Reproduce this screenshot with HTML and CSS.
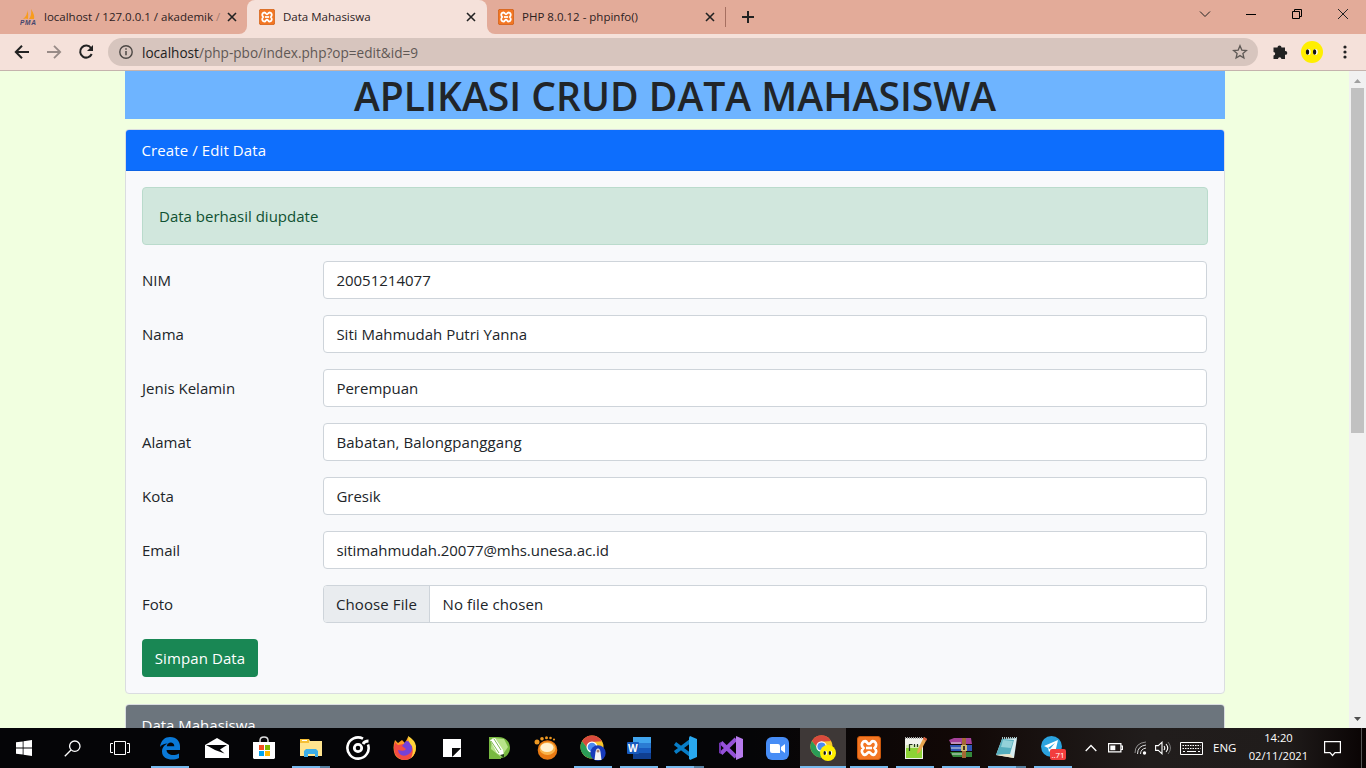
FILE: index.html
```html
<!DOCTYPE html>
<html lang="id">
<head>
<meta charset="utf-8">
<title>Data Mahasiswa</title>
<link rel="stylesheet" href="styles.css">
</head>
<body>
<svg class="defs" width="0" height="0">
  <symbol id="xampp" viewBox="0 0 24 24">
    <rect x=".5" y=".5" width="23" height="23" rx="2.5" fill="#f37623" stroke="#c9570c"/>
    <path d="M6.500 5.600Q9 4.500 10.300 6.800Q12 9 13.700 6.800Q15 4.500 17.500 5.600Q20.800 8.500 17.600 12Q20.800 15.500 17.500 18.400Q15 19.500 13.700 17.200Q12 15 10.300 17.200Q9 19.500 6.500 18.400Q3.200 15.500 6.400 12Q3.200 8.500 6.500 5.600Z" fill="none" stroke="#fff" stroke-width="2.700"/>
    <path d="M9 12h6" stroke="#fff" stroke-width="2.600"/>
  </symbol>
  <symbol id="close" viewBox="0 0 10 10"><path d="M1 1l8 8M9 1L1 9" stroke="#222" stroke-width="1.600"/></symbol>
  <symbol id="chrome" viewBox="0 0 24 24">
    <circle cx="12" cy="12" r="11.500" fill="#f8c62c"/>
    <path d="M2 6.200A11.500 11.500 0 0 1 22 6.200L12 7L8 14Z" fill="#d94a3d"/>
    <path d="M2 6.200A11.500 11.500 0 0 0 11.500 23.500L16 15L8 14Z" fill="#2a9c57"/>
    <circle cx="12" cy="12" r="5.500" fill="#fff"/><circle cx="12" cy="12" r="4.300" fill="#4a8af0"/>
  </symbol>
  <symbol id="face" viewBox="0 0 22 22">
    <circle cx="11" cy="11" r="11" fill="#ffef00"/>
    <ellipse cx="7.300" cy="11" rx="2.400" ry="3" fill="#fff"/><ellipse cx="14.400" cy="11" rx="2.400" ry="3" fill="#fff"/>
    <ellipse cx="6.500" cy="11" rx="1.700" ry="2.800" fill="#111"/><ellipse cx="13.600" cy="11" rx="1.700" ry="2.800" fill="#111"/>
  </symbol>
</svg>

<header class="tabs">
  <div class="tab tab-pma">
    <svg width="16" height="16" viewBox="0 0 16 16"><path d="M7 1q1 5-4 9 3-1 5 0Q9 5 7 1ZM11 0q4 6 3 10H9Q12 6 11 0Z" fill="#f89c1c"/><text x="0" y="15.500" class="pma-text" textLength="16">PMA</text></svg>
    <span class="tab-title">localhost / 127.0.0.1 / akademik <i>/</i></span>
    <svg class="x" width="10" height="10"><use href="#close"/></svg>
  </div>
  <div class="tab-slot">
    <div class="tab tab-active">
      <svg width="16" height="16"><use href="#xampp"/></svg>
      <span class="tab-title">Data Mahasiswa</span>
      <svg class="x" width="10" height="10"><use href="#close"/></svg>
    </div>
  </div>
  <div class="tab tab-php">
    <svg width="16" height="16"><use href="#xampp"/></svg>
    <span class="tab-title">PHP 8.0.12 - phpinfo()</span>
    <svg class="x" width="10" height="10"><use href="#close"/></svg>
    <i class="divider"></i>
  </div>
  <svg class="newtab" width="12" height="12" viewBox="0 0 12 12"><path d="M6 0v12M0 6h12" stroke="#222" stroke-width="2"/></svg>
  <div class="winbtns">
    <svg width="12" height="12" viewBox="0 0 12 12"><path d="M1 3.500l5 5 5-5" fill="none" stroke="#222"/></svg>
    <svg width="12" height="12" viewBox="0 0 12 12"><path d="M1 6.500h10" stroke="#000"/></svg>
    <svg width="12" height="12" viewBox="0 0 12 12"><path d="M1.500 3.500h7v7h-7zM3.500 3.500v-2h7v7h-2" fill="none" stroke="#000"/></svg>
    <svg width="12" height="12" viewBox="0 0 12 12"><path d="M1 1l10 10M11 1L1 11" stroke="#222"/></svg>
  </div>
</header>

<nav class="toolbar">
  <svg width="16" height="14" viewBox="0 0 16 14"><path d="M15 7H2M8 .8L1.800 7 8 13.200" fill="none" stroke="#222" stroke-width="2"/></svg>
  <svg width="16" height="14" viewBox="0 0 16 14"><path d="M1 7h13M8 .8L14.200 7 8 13.200" fill="none" stroke="#988b87" stroke-width="1.800"/></svg>
  <svg width="16" height="16" viewBox="0 0 16 16"><path d="M13 4A6 6 0 1 0 13.700 10" fill="none" stroke="#222" stroke-width="2"/><path d="M15 1v6H9z" fill="#222"/></svg>
  <div class="address">
    <svg width="16" height="16" viewBox="0 0 16 16"><circle cx="8" cy="8" r="6.200" fill="none" stroke="#4c4744" stroke-width="1.400"/><path d="M8 7v4.300M8 4.300v1.500" stroke="#4c4744" stroke-width="1.500"/></svg>
    <span class="url"><b>localhost</b>/php-pbo/index.php?op=edit&amp;id=9</span>
    <svg class="star" width="16" height="16" viewBox="0 0 16 16"><path d="M8 1.800l1.800 4.300 4.600.4-3.500 3 1 4.500L8 11.600 4.100 14l1-4.500-3.500-3 4.600-.4z" fill="none" stroke="#5f5956" stroke-width="1.300"/></svg>
  </div>
  <svg class="puzzle" width="16" height="16" viewBox="0 0 16 16"><path d="M2 3.500h3.500a2 2 0 1 1 4 0H13V7h.4a1.900 1.900 0 0 1 0 3.800H13V15H9.400a1.700 1.700 0 0 0-3.400 0H1.500v-3.600a1.700 1.700 0 0 0 0-3.400V3.500z" fill="#222"/></svg>
  <svg class="avatar" width="22" height="22"><use href="#face"/></svg>
  <svg class="dots" width="4" height="14" viewBox="0 0 4 14"><circle cx="2" cy="2" r="1.600"/><circle cx="2" cy="7" r="1.600"/><circle cx="2" cy="12" r="1.600"/></svg>
</nav>

<div class="viewport">
  <main class="page">
    <h1>APLIKASI CRUD DATA MAHASISWA</h1>
    <section class="card">
      <div class="card-header create">Create / Edit Data</div>
      <div class="card-body">
        <div class="alert">Data berhasil diupdate</div>
        <div class="row"><label>NIM</label><div class="control">20051214077</div></div>
        <div class="row"><label>Nama</label><div class="control">Siti Mahmudah Putri Yanna</div></div>
        <div class="row"><label>Jenis Kelamin</label><div class="control">Perempuan</div></div>
        <div class="row"><label>Alamat</label><div class="control address-value">Babatan, Balongpanggang</div></div>
        <div class="row"><label>Kota</label><div class="control">Gresik</div></div>
        <div class="row"><label>Email</label><div class="control email-value">sitimahmudah.20077@mhs.unesa.ac.id</div></div>
        <div class="row"><label>Foto</label><div class="control file"><span class="choose">Choose File</span><span class="nofile">No file chosen</span></div></div>
        <button class="save">Simpan Data</button>
      </div>
    </section>
    <section class="card card-list"><div class="card-header gray">Data Mahasiswa</div></section>
  </main>
  <aside class="scrollbar">
    <svg width="7" height="4" viewBox="0 0 7 4"><path d="M0 4L3.500 0 7 4z" fill="#a0a0a0"/></svg>
    <div class="thumb"></div>
    <svg class="down" width="7" height="4" viewBox="0 0 7 4"><path d="M0 0l3.500 4L7 0z" fill="#505050"/></svg>
  </aside>
</div>

<footer class="taskbar">
  <div class="sys"><svg width="16" height="16" viewBox="0 0 16 16"><path d="M0 2.300L6.700 1.400V7.500H0zM7.500 1.300L16 0v7.500H7.500zM0 8.500h6.700v6.100L0 13.700zM7.500 8.500H16V16l-8.500-1.300z" fill="#fff"/></svg></div>
  <div class="sys"><svg width="17" height="17" viewBox="0 0 17 17"><circle cx="10.800" cy="6.200" r="5.200" fill="none" stroke="#fff" stroke-width="1.300"/><path d="M7 10L.8 16.200" stroke="#fff" stroke-width="1.300"/></svg></div>
  <div class="sys"><svg width="20" height="14" viewBox="0 0 20 14"><path d="M4.500.5h11v13h-11zM3 2.500H.5v9H3M17 2.500h2.500v9H17" fill="none" stroke="#fff"/></svg></div>

  <div class="app on"><svg width="22" height="24" viewBox="0 0 22 24"><path d="M1 11C2 4 6 1 11 1c7 0 10 5 10 9v4H7.500c.5 5 7 6.500 12.500 3.500V22C14 25 3 24 3 15.500 3 10.500 7 8 9 7.500 5 7.500 2.500 9 1 11zM7.800 10.200h7.500C15.300 5.500 8.500 5.200 7.800 10.200z" fill="#0a79d7"/></svg></div>
  <div class="app"><svg width="24" height="20" viewBox="0 0 24 20"><path d="M0 7L12 0l12 7v13H0z" fill="#fff"/><path d="M1 7h21l-7 4.500 4.500 4L10 12z" fill="#050507"/></svg></div>
  <div class="app"><svg width="24" height="24" viewBox="0 0 24 24"><path d="M8 7V4.500Q8 1 12 1t4 3.500V7" fill="none" stroke="#ddd" stroke-width="1.500"/><path d="M1 6h22v16l-1 1H2l-1-1z" fill="#fff"/><path d="M7 9h5v5H7z" fill="#f25022"/><path d="M13 9h5v5h-5z" fill="#7fba00"/><path d="M7 15h5v5H7z" fill="#00a4ef"/><path d="M13 15h5v5h-5z" fill="#ffb900"/></svg></div>
  <div class="app on stacked"><svg width="22" height="20" viewBox="0 0 22 20"><path d="M0 1h9l1 2h12v15H0z" fill="#ffe48e"/><path d="M0 1h9v4H0z" fill="#f5bf36"/><path d="M2 2h5v1H2z" fill="#fff"/><path d="M4 19v-6l2-2h10l2 2v6h-3v-3H8v3z" fill="#3caee8"/></svg></div>
  <div class="app"><svg width="24" height="24" viewBox="0 0 24 24"><path d="M17 2.700A10.600 10.600 0 1 0 22 8.500" fill="none" stroke="#fff" stroke-width="2.600"/><circle cx="12" cy="12" r="3.700" fill="none" stroke="#fff" stroke-width="2.800"/><path d="M17 8q1.500-3 5.500-3" fill="none" stroke="#fff" stroke-width="2.800"/></svg></div>
  <div class="app"><svg width="24" height="24" viewBox="0 0 24 24"><path d="M2 4l3 3 4-3 3 3 3-6 3 5 3 1q3 5 1 10-3 7-10 7T2 19Q-1 12 2 4z" fill="#ff9c22"/><path d="M2 6l3 3 5-1 6 4 4-2 2 7q-4 7-10 7T2 18Q0 12 2 6z" fill="#f34b43"/><path d="M13 5q5 0 6 5t-3 8-8 1q-3-2-3-5 7 2 8-1l-4-3z" fill="#7542d8"/><path d="M15 0q7 4 8 10 0 8-5 12 3-6 1-12-4-4-4-10z" fill="#ffd43a"/></svg></div>
  <div class="app"><svg width="18" height="18" viewBox="0 0 18 18"><path d="M0 0h18v18H0z" fill="#fff"/><path d="M9 9h9L9 18z" fill="#0b0b0c"/><path d="M9 18l9-9v9z" fill="#fff"/><path d="M9.500 17.500l8-8" stroke="#0b0b0c" stroke-width=".6"/></svg></div>
  <div class="app"><svg width="22" height="24" viewBox="0 0 22 24"><path d="M1 1h9c9 0 12 6 12 11S18 22 13 22v1H1z" fill="#78b941"/><path d="M4 2l12 1 4 8-7 10L3 13z" fill="#b8e38a"/><path d="M2 4l5-2 8 12 1 7-7-4z" fill="#fff"/><path d="M6 3l7 11M3 5l8 12" stroke="#7eb750"/><path d="M12 19l4-1v4z" fill="#244218"/></svg></div>
  <div class="app"><svg width="24" height="24" viewBox="0 0 24 24"><circle cx="13.500" cy="14" r="9.800" fill="#e97a12"/><ellipse cx="13.500" cy="12.500" rx="8" ry="6.500" fill="#f9b44b"/><ellipse cx="13" cy="11.500" rx="6.500" ry="4.500" fill="#fff0cf"/><g fill="#ed9822"><circle cx="3" cy="6" r="2.500"/><circle cx="8" cy="2.800" r="1.800"/><circle cx="12.500" cy="1.800" r="1.500"/><circle cx="16.500" cy="2" r="1.300"/><circle cx="20" cy="3.500" r="1.100"/></g></svg></div>
  <div class="app on"><svg width="26" height="26" viewBox="0 0 26 26"><svg x="0" y="0" width="24" height="24"><use href="#chrome"/></svg><circle cx="18" cy="18" r="7.700" fill="#173bbb"/><path d="M14.500 25l1-8q.5-3.500 2.500-3.500t2.500 3.500l1 8z" fill="#f3f3f5"/><circle cx="18" cy="16" r="1.500" fill="#a77d6b"/></svg></div>
  <div class="app n on"><svg width="24" height="22" viewBox="0 0 24 22"><rect x="6" width="18" height="22" rx="1" fill="#2b7cd3"/><path d="M6 0h18v6H6z" fill="#41a5ee"/><path d="M6 11h18v5H6z" fill="#185abd"/><path d="M6 16h18v6H6z" fill="#103f91"/><rect y="5" width="12" height="12" rx="1" fill="#185abd"/><text x="1" y="14.800" class="word-w" textLength="10">W</text></svg></div>
  <div class="app n on stacked"><svg width="24" height="24" viewBox="0 0 24 24"><path d="M18 4.500L2 16.500M18 19.500L2 7.500" stroke="#087dc6" stroke-width="3.600"/><path d="M17 0l7 3v18l-7 3-1-1.500V1.500z" fill="#29a9f0"/></svg></div>
  <div class="app n"><svg width="24" height="24" viewBox="0 0 24 24"><path d="M17 3L2 17.500M17 21L2 6.500" stroke="#9551d8" stroke-width="4"/><path d="M0 7l2-1v12l-2-1z" fill="#7134ae"/><path d="M17 0l7 3v18l-7 3z" fill="#b77bed"/></svg></div>
  <div class="app n"><svg width="23" height="23" viewBox="0 0 23 23"><rect width="23" height="23" rx="6" fill="#478df6"/><path d="M4 7h8q2 0 2 2v7H6q-2 0-2-2zM15 10l4-3v9l-4-3z" fill="#fff"/></svg></div>
  <div class="app n on current"><svg width="26" height="26" viewBox="0 0 26 26"><svg x="0" y="0" width="23" height="23"><use href="#chrome"/></svg><svg x="10" y="10" width="16" height="16"><use href="#face"/></svg></svg></div>
  <div class="app n on"><svg width="24" height="24"><use href="#xampp"/></svg></div>
  <div class="app n on"><svg width="24" height="24" viewBox="0 0 24 24"><path d="M2 2h18v21H2z" fill="#f2f2ec"/><path d="M3 12h16v10H3z" fill="#8dd335"/><path d="M3 9h16v3H3z" fill="#d4ecb0"/><path d="M2 2h18" stroke="#aaa" stroke-width="2" stroke-dasharray="1 1"/><path d="M6.500 15V8.500h3M11.500 8v3M14.500 8v3" fill="none" stroke="#24331d" stroke-width="1.200"/><path d="M21 1l3 2-7 13-3 2 .5-4z" fill="#e7a54e"/><path d="M21 1l3 2-1 2-3-2z" fill="#d55b43"/></svg></div>
  <div class="app n on"><svg width="24" height="20" viewBox="0 0 24 20"><path d="M0 2l5-2h17l1 6H2z" fill="#a6429a"/><path d="M1 7h22v6H2z" fill="#3156b8"/><path d="M1 14h22v5H4z" fill="#35893b"/><path d="M2 5h10M2 10h10M3 16h10" stroke="#ddd"/><path d="M13 0h4v20h-4z" fill="#a46a35"/><path d="M12 7h6v6h-6z" fill="#cfbb72"/><path d="M14 8h2v4h-2z" fill="#463520"/></svg></div>
  <div class="app n on stacked"><svg width="24" height="24" viewBox="0 0 24 24"><path d="M7 3l15-1-3 20-18-3z" fill="#d8eef2"/><path d="M7 3l12 1-4 14-14 1z" fill="#55adbd"/><path d="M8 4l10 1-2 7-10-1z" fill="#93d1d9"/><path d="M1 19l14-1 4 4z" fill="#eee4c8"/><path d="M7 2h15" stroke="#a5c4c7" stroke-width="2" stroke-dasharray="1 1"/></svg></div>
  <div class="app n on"><svg width="26" height="26" viewBox="0 0 26 26"><circle cx="11.500" cy="11.500" r="10.500" fill="#2ba3df"/><path d="M4 11l14-6-3 13-4-3-2 2-1-4z" fill="#fff"/><path d="M8 13l7-5-5 6z" fill="#2ba3df"/><rect x="10" y="14" width="16" height="11" rx="2" fill="#f23d3d"/><text x="11.500" y="23" class="badge" textLength="13">..71</text></svg></div>

  <div class="tray">
    <svg width="12" height="8" viewBox="0 0 12 8"><path d="M.7 7L6 1.500 11.300 7" fill="none" stroke="#fff" stroke-width="1.300"/></svg>
    <svg class="t-bat" width="15" height="10" viewBox="0 0 15 10"><path d="M.6.600h12.300v8.300H.600zM13 3h1.500v3.500H13" fill="none" stroke="#fff" stroke-width="1.200"/><path d="M2.300 2.500h5v4.700h-5z" fill="#fff"/></svg>
    <svg class="t-wifi" width="13" height="14" viewBox="0 0 13 14"><g fill="none" stroke="#ddd"><path d="M1 12Q1 2 12 1" opacity=".6"/><path d="M3.500 13Q3.500 5 12 4"/><path d="M6.500 13Q6.500 8 12 7"/></g><circle cx="10.500" cy="12" r="1.700" fill="#fff"/></svg>
    <svg class="t-vol" width="17" height="14" viewBox="0 0 17 14"><path d="M.6 4.600h2.700L7 1.200v11.600L3.300 9.400H.600zM9 5q1.500 2 0 4M11 3q3.500 4 0 8" fill="none" stroke="#fff" stroke-width="1.100"/><path d="M13 1q5 6 0 12" fill="none" stroke="#777"/></svg>
    <svg class="t-key" width="23" height="13" viewBox="0 0 23 13"><path d="M.5.500h22v12H.5z" fill="none" stroke="#fff"/><path d="M2.500 3.500h18M2.500 6.500h18" stroke="#fff" stroke-dasharray="1.500 1"/><path d="M3 9.500h2M7 9.500h9M18 9.500h2" stroke="#fff"/></svg>
    <span class="lang">ENG</span>
    <div class="clock"><span>14:20</span><span>02/11/2021</span></div>
    <svg class="note" width="17" height="17" viewBox="0 0 17 17"><path d="M.6 1.600h15.800v11H11L8.500 15.500 6 12.600H.600z" fill="none" stroke="#fff" stroke-width="1.200"/></svg>
  </div>
</footer>
</body>
</html>
```
FILE: styles.css
```css
* { box-sizing: border-box; }
body { margin: 0; width: 1366px; height: 768px; overflow: hidden; display: flex; flex-direction: column; font-family: "Open Sans", "Noto Sans", sans-serif; font-size: 15px; color: #212529; }
svg { display: block; flex: none; }
.defs { position: absolute; }
span { white-space: nowrap; }

.tabs { height: 34px; flex: none; background: #f5e1da; display: flex; align-items: center; }
.tab { height: 34px; display: flex; align-items: center; font-size: 11.5px; color: #2d211e; }
.tab-title { margin: -2px 0 0 8px; }
.tab .x { margin-left: auto; }
.tab-pma { width: 247px; padding: 0 10px 0 20px; background: #e3ab99; border-bottom-right-radius: 8px; }
.tab-pma i { font-style: normal; opacity: .35; }
.tab-slot { width: 240px; background: linear-gradient(#e3ab99 17px, #f5e1da 17px); }
.tab-active { padding: 0 11px 0 12px; background: #f5e1da; border-radius: 8px 8px 0 0; }
.tab-php { width: 239px; padding-left: 11px; background: #e3ab99; border-bottom-left-radius: 8px; }
.divider { width: 1px; height: 20px; margin-left: 10px; background: #a66f60; }
.newtab { width: 28px; height: 34px; padding: 11px 0 11px 16px; background: #e3ab99; }
.winbtns { flex: 1; height: 34px; display: flex; justify-content: flex-end; align-items: center; gap: 34px; padding: 0 17px 6px 0; background: #e3ab99; }
.pma-text { font: italic bold 6.5px "Liberation Sans", sans-serif; fill: #44466e; }

.toolbar { height: 37px; flex: none; background: #f5e1da; border-bottom: 1px solid #c5b3ad; display: flex; align-items: center; padding-left: 14px; gap: 16px; }
.address { width: 1150px; height: 28px; margin-left: -2px; border-radius: 14px; background: #d7c5be; display: flex; align-items: center; padding: 0 10px; }
.url { margin-left: 8px; font-size: 13.6px; color: #5f5855; }
.url b { font-weight: 400; color: #222; }
.star { margin-left: auto; }
.puzzle { margin-left: -2px; }
.avatar { margin-left: -3px; }
.dots { margin-left: 4px; fill: #222; }

.viewport { flex: 1; min-height: 0; overflow: hidden; display: flex; background: #f1ffe0; }
.page { width: 1349px; padding: 0 124px 0 125px; }
h1 { margin: 0 0 10px; height: 48px; line-height: 50px; background: #6eb4ff; text-align: center; font-size: 39.1px; font-weight: 600; }
.card { border: 1px solid #dadde0; border-radius: 4px; background: #f8f9fb; overflow: hidden; }
.card-header { height: 41px; padding: 0 15.500px; line-height: 41px; background: #0d6efd; color: #fff; border-bottom: 1px solid #0c63e4; }
.create { letter-spacing: .1px; }
.card-header.gray { background: #6c757d; border: 0; }
.card-list { margin-top: 10px; height: 200px; }
.card-body { padding: 16px; display: flex; flex-direction: column; gap: 16px; }
.alert { height: 58px; padding: 0 16px; line-height: 57px; border: 1px solid #badbcc; border-radius: 4px; background: #d1e7dd; color: #0f5132; }
.row { display: grid; grid-template-columns: 181px 884px; height: 38px; line-height: 38px; }
.control { height: 38px; padding: 0 12.400px; line-height: 37px; border: 1px solid #ced4da; border-radius: 4px; background: #fff; }
.address-value { letter-spacing: .1px; }
.email-value { letter-spacing: -.06px; }
.file { display: flex; padding: 0; overflow: hidden; }
.choose { width: 106px; padding-left: 12px; background: #e9ecef; border-right: 1px solid #ced4da; letter-spacing: .1px; }
.nofile { margin-left: 12.500px; letter-spacing: .1px; }
.save { width: 116px; height: 38px; padding: 0; border: 0; border-radius: 4px; background: #198754; color: #fff; font: inherit; letter-spacing: .1px; }

.scrollbar { width: 17px; background: #f1f1f1; display: flex; flex-direction: column; align-items: center; padding: 8px 0 7px; }
.thumb { width: 13px; height: 345px; margin-top: 5px; background: #c1c1c1; }
.down { margin-top: auto; }

.taskbar { height: 40px; flex: none; display: flex; color: #fff; background: linear-gradient(90deg, #050507 0, #050507 55%, #110806 70%, #211d1c 84%, #201c1b 94%, #090303 100%); }
.sys { width: 48px; display: flex; align-items: center; justify-content: center; }
.sys + .app { margin-left: 2px; }
.app { width: 47px; height: 40px; display: flex; align-items: center; justify-content: center; background: no-repeat 50% 100% / 38px 2px; }
.app.n { width: 46px; }
.app.on { background-image: linear-gradient(#76b9ed, #76b9ed); }
.app.stacked { background-image: linear-gradient(90deg, #76b9ed 28px, #557f9f 28px); }
.app.current { background-color: #3e3837; background-size: 100% 2px; }
.word-w { font: bold 10px "Open Sans", sans-serif; fill: #fff; }
.badge { font: 8px "Open Sans", sans-serif; fill: #fff; }
.tray { flex: 1; display: flex; align-items: center; padding-left: 9px; border-right: 1px solid #555; margin-right: 4px; }
.t-bat { margin-left: 11px; }
.t-wifi { margin-left: 11px; }
.t-vol { margin-left: 8px; }
.t-key { margin-left: 8px; }
.lang { margin-left: 10px; margin-top: -2px; font-size: 11.500px; }
.clock { width: 60px; margin-left: 12px; display: flex; flex-direction: column; align-items: center; font-size: 11.200px; line-height: 18px; margin-top: -2px; }
.note { margin-left: 16px; }
```
